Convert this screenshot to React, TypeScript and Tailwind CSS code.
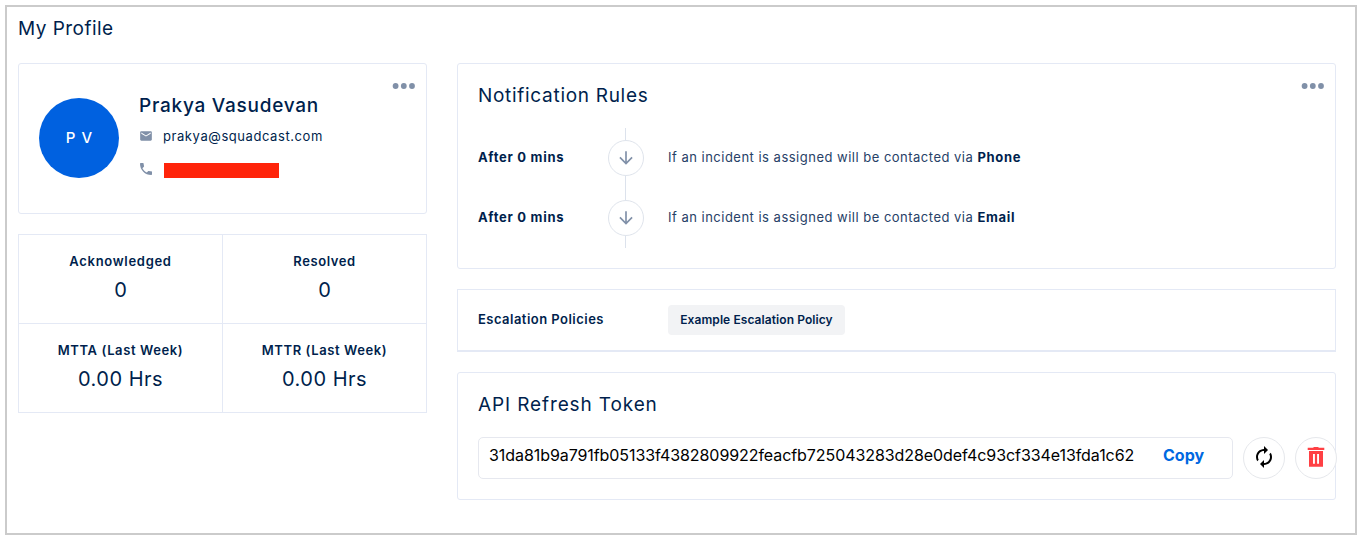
import type { ReactNode } from "react";
import { MdArrowDownward, MdAutorenew, MdEmail, MdPhone } from "react-icons/md";

function MoreDots() {
  return (
    <svg width="24" height="8" viewBox="0 0 24 8" fill="#8090a8">
      <circle cx="3.6" cy="4" r="2.9" />
      <circle cx="11.8" cy="4" r="2.9" />
      <circle cx="20" cy="4" r="2.9" />
    </svg>
  );
}

function TrashIcon() {
  return (
    <svg width="18" height="22" viewBox="0 0 18 22" fill="#ff4044">
      <path d="M0.7 1.7H6.2L6.8 1H11.2L11.8 1.7H17.3V4.1H0.7Z" />
      <path fillRule="evenodd" d="M2 4.9H16V20.8H2ZM6 7.9V17.7H7.9V7.9ZM10.1 7.9V17.7H12V7.9Z" />
    </svg>
  );
}

function Stat({ label, value, className }: { label: ReactNode; value: ReactNode; className: string }) {
  return (
    <div className={`flex flex-col items-center border-[#e4e9f5] pt-4 ${className}`}>
      <div className="text-[13px] leading-5 font-semibold whitespace-nowrap">{label}</div>
      <div className="mt-[6px] text-[20px] leading-[26px] whitespace-nowrap">{value}</div>
    </div>
  );
}

function Rule({ via }: { via: ReactNode }) {
  return (
    <div className="flex h-[60px]">
      <div className="w-[130px] pt-[19px] text-[13px] leading-5 font-bold">
        <span className="tracking-[0.72px]">After 0 mins</span>
      </div>
      <div className="flex w-9 flex-col items-center">
        <div className="mr-px h-3 w-px bg-[#dce2ec]" />
        <div className="flex size-9 items-center justify-center rounded-full border border-[#dfe4ec]">
          <MdArrowDownward size={20} color="#8090a8" />
        </div>
        <div className="mr-px h-3 w-px bg-[#dce2ec]" />
      </div>
      <div className="pt-[19px] pl-6 text-[13px] leading-5 whitespace-nowrap">
        <span className="tracking-[0.49px] text-[#274167]">If an incident is assigned will be contacted via </span>
        {via}
      </div>
    </div>
  );
}

export default function App() {
  return (
    <div className="h-[540px] bg-white p-[5px] pb-0 font-['Inter','Liberation_Sans',sans-serif] text-[#001f4d]">
      <div className="h-[530px] w-[1352px] border-2 border-[#cbcbcb] pl-[11px]">
        <h1 className="h-14 pt-[9px] text-[19px] leading-[26px] whitespace-nowrap">
          <span className="tracking-[0.46px]">My Profile</span>
        </h1>

        <div className="flex gap-[30px]">
          <div className="flex w-[409px] flex-col gap-5">
            <section className="flex h-[151px] rounded-[3px] border border-[#e4e9f5] pl-5">
              <div className="mt-[34px] flex size-20 items-center justify-center rounded-full bg-[#0061e0] text-[15px] font-medium text-white">
                <span className="pl-px tracking-[1px]">P V</span>
              </div>
              <div className="ml-5 flex-1 pt-[29px]">
                <div className="text-[19px] leading-[26px] font-medium whitespace-nowrap">
                  <span className="tracking-[0.75px]">Prakya Vasudevan</span>
                </div>
                <div className="mt-2 flex h-5 items-center">
                  <MdEmail size={14} color="#8090a8" className="mb-0.5" />
                  <span className="ml-2.5 text-[13px] tracking-[0.57px]">prakya@squadcast.com</span>
                </div>
                <div className="mt-3 flex h-5 items-center">
                  <MdPhone size={16} color="#8090a8" className="-ml-px" />
                  <div className="mt-[3px] ml-[10px] h-[15px] w-[115px] bg-[#ff240a]" />
                </div>
              </div>
              <div className="mt-[18px] mr-[10px]">
                <MoreDots />
              </div>
            </section>

            <section className="grid h-[179px] grid-cols-[204px_203px] grid-rows-[89px_88px] border border-[#e4e9f5]">
              <Stat className="border-r border-b" label={<span className="tracking-[0.7px]">Acknowledged</span>} value="0" />
              <Stat className="border-b" label={<span className="tracking-[0.6px]">Resolved</span>} value="0" />
              <Stat
                className="border-r"
                label={<span className="tracking-[0.6px]">MTTA (Last Week)</span>}
                value={<span className="tracking-[0.5px]">0.00 Hrs</span>}
              />
              <Stat
                className=""
                label={<span className="tracking-[0.6px]">MTTR (Last Week)</span>}
                value={<span className="tracking-[0.5px]">0.00 Hrs</span>}
              />
            </section>
          </div>

          <div className="flex w-[879px] flex-col">
            <section className="h-[206px] rounded-[3px] border border-[#e4e9f5] pl-5">
              <div className="flex h-16 justify-between">
                <h2 className="pt-[19px] text-[19px] leading-[26px] whitespace-nowrap">
                  <span className="tracking-[0.7px]">Notification Rules</span>
                </h2>
                <div className="mt-[18px] mr-[10px]">
                  <MoreDots />
                </div>
              </div>
              <Rule via={<b className="tracking-[0.7px]">Phone</b>} />
              <Rule via={<b className="tracking-[0.65px]">Email</b>} />
            </section>

            <section className="mt-5 flex h-[63px] border border-b-2 border-[#e4e9f5] pl-5">
              <div className="w-[190px] pt-[19px] text-[13px] leading-5 font-semibold">
                <span className="tracking-[0.47px]">Escalation Policies</span>
              </div>
              <div className="mt-[15px] flex h-[30px] w-[177px] items-center justify-center rounded-[4px] bg-[#f2f3f5] text-[12px] font-semibold whitespace-nowrap">
                <span className="tracking-[0.08px]">Example Escalation Policy</span>
              </div>
            </section>

            <section className="mt-5 h-[128px] rounded-[3px] border border-[#e4e9f5] pl-5">
              <h2 className="h-16 pt-[19px] text-[19px] leading-[26px] whitespace-nowrap">
                <span className="tracking-[0.88px]">API Refresh Token</span>
              </h2>
              <div className="flex w-[859px] gap-[10px]">
                <div className="flex h-[42px] w-[755px] shrink-0 rounded-[5px] border border-[#e6e8ef] pt-[5px] pl-[10px] text-[16px] leading-6 whitespace-nowrap">
                  <div className="w-[674px] text-black">
                    <span className="tracking-[-0.07px]">31da81b9a791fb05133f4382809922feacfb725043283d28e0def4c93cf334e13fda1c62</span>
                  </div>
                  <div className="font-bold text-[#0068e1]">Copy</div>
                </div>
                <div className="flex size-[42px] shrink-0 items-center justify-center rounded-full border border-[#e6e8ec] pb-0.5">
                  <MdAutorenew size={24} color="#000" />
                </div>
                <div className="flex size-[42px] shrink-0 items-center justify-center rounded-full border border-[#e6e8ec] bg-white pb-0.5">
                  <TrashIcon />
                </div>
              </div>
            </section>
          </div>
        </div>
      </div>
    </div>
  );
}
